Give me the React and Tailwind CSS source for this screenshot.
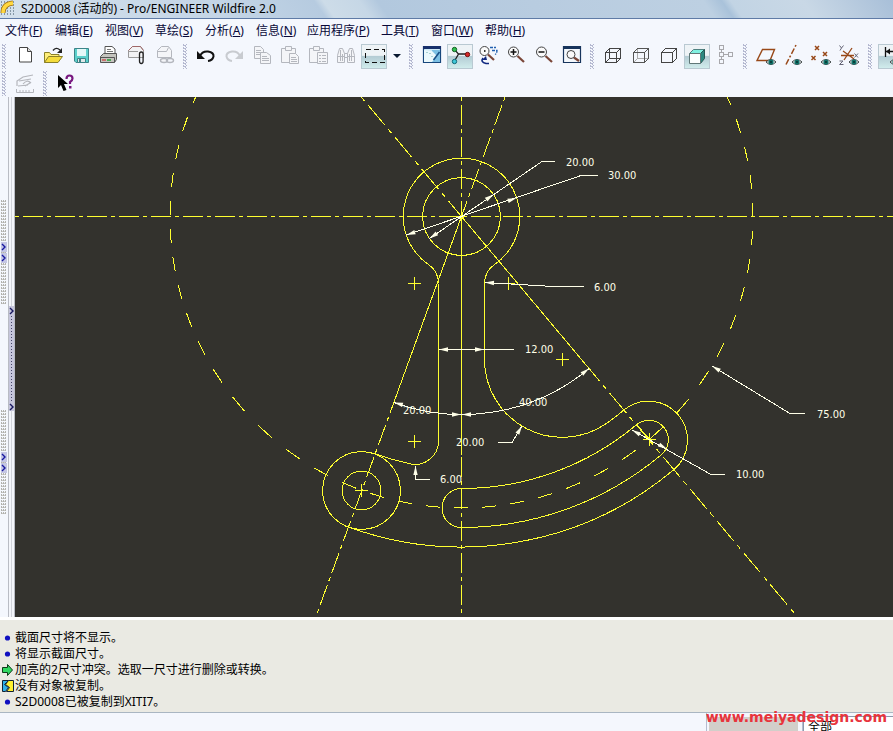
import React from "react";

const YELLOW = "#ffff30";
const PALE = "#ffffe8";

const MENUS = [
  ["文件", "F", "w-[50px]"],
  ["编辑", "E", "w-[50px]"],
  ["视图", "V", "w-[50px]"],
  ["草绘", "S", "w-[50px]"],
  ["分析", "A", "w-[51px]"],
  ["信息", "N", "w-[51px]"],
  ["应用程序", "P", "w-[74px]"],
  ["工具", "T", "w-[50px]"],
  ["窗口", "W", "w-[54px]"],
  ["帮助", "H", "w-[50px]"],
];

function Eye({ x, y }) {
  return (
    <g transform={`translate(${x} ${y})`}>
      <path d="M-5 0Q0 -5 5 0Q0 5 -5 0Z" fill="#e8eeee" stroke="#3c4444" />
      <circle r="2.6" fill="#0f7068" />
      <circle r="1" fill="#06302c" />
    </g>
  );
}

function Magnifier({ cx = 9.5, cy = 8, r = 5, end = 20, children }) {
  return (
    <>
      <path d={`M${cx + r - 1} ${cy + r - 1}L${end} ${end - 2}`} stroke="#7a4638" strokeWidth="2.2" />
      <circle cx={cx} cy={cy} r={r} fill="#fafafa" stroke="#444" strokeWidth="1" />
      {children}
    </>
  );
}

const GRAY = "#b4b7be";

const ICONS = {
  create: (
    <>
      <path d="M6.500 3.500h8l4 4v10.500h-12z" fill="#fff" stroke="#444" />
      <path d="M14.500 3.500v4h4" fill="#ddd" stroke="#444" />
    </>
  ),
  open: (
    <>
      <path d="M3.500 18.500V8.500h5l1.500 2h8v3" fill="#ffef7a" stroke="#8a8028" />
      <path d="M3.500 18.500l4-6h14l-4.500 6z" fill="#f4dc3c" stroke="#8a8028" />
      <path d="M12 6.500q3-4 7-.5" fill="none" stroke="#222" strokeWidth="1.300" />
      <path d="M21 4v5h-5z" fill="#222" />
    </>
  ),
  save: (
    <>
      <path d="M5.500 4.500h14v14h-12.500l-1.500-1.500z" fill="#5cd0cc" stroke="#3c8488" />
      <path d="M8 5h9v7h-9z" fill="#e4f8f8" />
      <path d="M8.500 14.500h8v4h-8z" fill="#e0e8e8" stroke="#3c8488" />
      <path d="M10 15h2v3h-2z" fill="#3c8488" />
    </>
  ),
  print: (
    <>
      <path d="M8 10V2.500h7l3 2.500v6" fill="#fff" stroke="#555" />
      <path d="M10 5.500h4M10 7.500h6" stroke="#777" />
      <path d="M3.500 12.500l3-3h13v6l-2 3h-14z" fill="#c4c4be" stroke="#555" />
      <path d="M3.500 13.500h14v5" fill="none" stroke="#555" />
      <path d="M5 16h4" stroke="#d02020" />
      <path d="M10 16h4" stroke="#20a030" strokeWidth="1.500" />
    </>
  ),
  mail: (
    <>
      <path d="M3.500 13.500V6.500l4-4h8l3 4v7z" fill="#f2f2f4" stroke="#999" />
      <path d="M3.500 6.500l4-4h8l3 4" fill="none" stroke="#a06868" />
      <path d="M4 7.500h9M6 13.500h6" stroke="#999" />
      <path d="M14.500 11v6q0 2.500 1.800 2.500t1.800-2.500v-7q0-2-1.800-2t-1.800 2v6" fill="none" stroke="#222" strokeWidth="1.300" />
    </>
  ),
  link: (
    <>
      <path d="M4.500 13.500V6.500l4-4h7l3 4v7z" fill="#f4f5f8" stroke={GRAY} />
      <path d="M4.500 7.500h9l2-4" fill="none" stroke={GRAY} />
      <ellipse cx="11" cy="16.500" rx="3.500" ry="2" fill="#f4f5f8" stroke={GRAY} strokeWidth="1.400" />
      <ellipse cx="17" cy="16.500" rx="3.500" ry="2" fill="none" stroke={GRAY} strokeWidth="1.400" />
    </>
  ),
  undo: (
    <>
      <path d="M6 12q2-5 8-4.500q6 1 5.500 5q-1 4-5.500 4.500" fill="none" stroke="#111" strokeWidth="2" />
      <path d="M3 7v8h8z" fill="#111" />
    </>
  ),
  redo: (
    <>
      <path d="M18 12q-2-5-8-4.500q-6 1-5.500 5q1 4 5.500 4.500" fill="none" stroke="#c8cbd0" strokeWidth="2" />
      <path d="M21 7v8h-8z" fill="#c8cbd0" />
    </>
  ),
  copy: (
    <g fill="#f4f5f8" stroke={GRAY}>
      <path d="M4.500 2.500h6l3 3v9h-9z" />
      <path d="M6 6.500h5M6 8.500h5M6 10.500h5" />
      <path d="M10.500 8.500h6l4 3v8h-10z" />
      <path d="M12 12.500h5M12 14.500h7M12 16.500h7" />
    </g>
  ),
  paste: (
    <g fill="#f4f5f8" stroke={GRAY}>
      <path d="M3.500 4.500h14v14h-14z" />
      <path d="M7.500 2.500h6v4h-6z" />
      <path d="M11.500 9.500h6l3 3v7h-9z" />
      <path d="M13 13.500h5M13 15.500h6M13 17.500h6" />
    </g>
  ),
  special: (
    <g fill="#f4f5f8" stroke={GRAY}>
      <path d="M3.500 4.500h14v14h-14z" />
      <path d="M7.500 2.500h6v4h-6z" />
      <path d="M11.500 8.500h10v11h-10z" />
      <path d="M13 11.500h2M16 11.500h4M13 14.500h2M16 14.500h4M13 17.500h2M16 17.500h4" />
    </g>
  ),
  find: (
    <g fill="#f4f5f8" stroke={GRAY}>
      <path d="M5.500 4.500h3l2 5v9h-7v-7z" />
      <path d="M15.500 4.500h3l2 7v7h-7v-9z" />
      <path d="M4 12.500h6M14 12.500h6M10.500 9.500h3M10.500 13.500h3M6.500 6v11M17.500 6v11M8.500 10v7M15.500 10v7" />
    </g>
  ),
  select: <path d="M3.500 5.500h19v13h-19z" fill="none" stroke="#111" strokeDasharray="5 3" shapeRendering="crispEdges" />,
  sketch: (
    <>
      <path d="M3.500 2.500h17v16h-17z" fill="#cfeaf6" stroke="#17477c" strokeWidth="1.200" />
      <path d="M3 2h18v3h-18z" fill="#17306c" />
      <path d="M12 6h8v12h-10z" fill="#7cc0e4" />
      <path d="M4 6l8 1 5 5-5 6h-8z" fill="#eaf8fc" />
      <path d="M19.500 8l-6 8" stroke="#174f86" strokeWidth="1.600" />
      <path d="M7 8v1M10 9v1M12 12v1" stroke="#6aa" />
    </>
  ),
  nodes: (
    <>
      <path d="M6.500 5.500l4 4.500-4 7M10 10h9" fill="none" stroke="#222" strokeWidth="1.300" />
      <circle cx="6.500" cy="5.500" r="2.200" fill="#30c050" stroke="#146024" />
      <circle cx="19.500" cy="10.500" r="2.200" fill="#d82828" stroke="#701010" />
      <circle cx="6.500" cy="17.500" r="2.200" fill="#40c8d8" stroke="#106878" />
    </>
  ),
  orient: (
    <>
      <Magnifier cx={8.5} cy={7} r={4.5} end={18}>
        <path d="M8 7h2M8.500 6v2" stroke="#333" />
      </Magnifier>
      <path d="M14 3.500h6M16 6.500h5q0 3-2 4" fill="none" stroke="#2060b0" strokeWidth="1.300" strokeDasharray="3 1" />
      <path d="M7 14q-3 4 3 5.500h3" fill="none" stroke="#102880" strokeWidth="1.600" />
      <path d="M6 16h5l-1-4z" fill="#102880" />
    </>
  ),
  zoomIn: (
    <Magnifier>
      <path d="M6.500 8h6M9.500 5v6" stroke="#111" strokeWidth="1.500" />
    </Magnifier>
  ),
  zoomOut: (
    <Magnifier>
      <path d="M6.500 8h6" stroke="#111" strokeWidth="1.500" />
    </Magnifier>
  ),
  fit: (
    <>
      <path d="M3.500 2.500h17v16h-17z" fill="#f4f8fc" stroke="#17345c" strokeWidth="1.200" />
      <path d="M3 2h18v3h-18z" fill="#17345c" />
      <Magnifier cx={11} cy={10.5} r={4} end={19} />
    </>
  ),
  wire: (
    <g fill="none" stroke="#444" shapeRendering="crispEdges">
      <path d="M4.500 8.500h11v10h-11zM8.500 4.500h11v10h-11zM4.500 8.500l4-4M15.500 8.500l4-4M4.500 18.500l4-4M15.500 18.500l4-4" />
    </g>
  ),
  hidden: (
    <g fill="none" shapeRendering="crispEdges">
      <path d="M8.500 4.500v10h11M4.500 18.500l4-4" stroke="#aaa" />
      <path d="M4.500 8.500h11v10h-11zM4.500 8.500l4-4h11v10l-4 4M15.500 8.500l4-4" stroke="#555" />
    </g>
  ),
  noHidden: (
    <path d="M4.500 8.500h11v10h-11zM4.500 8.500l4-4h11v10l-4 4M15.500 8.500l4-4" fill="none" stroke="#444" shapeRendering="crispEdges" />
  ),
  shaded: (
    <>
      <path d="M4.500 9.500l4-4h11l-4 4z" fill="#7ff0e0" stroke="#508080" />
      <path d="M15.500 9.500l4-4v9l-4 5z" fill="#2c8880" stroke="#285854" />
      <path d="M4.500 9.500h11v10h-11z" fill="#fcffff" stroke="#607878" />
    </>
  ),
  tree: (
    <path
      d="M6.500 1.500h4v4h-4zM6.500 8.500h4v4h-4zM6.500 15.500h4v4h-4zM15.500 8.500h4v4h-4zM8.500 5.500v3M8.500 12.500v3M10.500 10.500h5"
      fill="none" stroke="#a8a8ac" shapeRendering="crispEdges"
    />
  ),
  plane: (
    <>
      <path d="M3 16.500L8.500 5.500H20.500L16 16.500z" fill="none" stroke="#984818" strokeWidth="1.400" />
      <Eye x={17} y={18} />
    </>
  ),
  axis: (
    <>
      <path d="M4 20.500L14 1" stroke="#984818" strokeWidth="1.500" strokeDasharray="6 2 2 2" />
      <Eye x={15} y={18} />
    </>
  ),
  points: (
    <>
      <path d="M5 2l4 4M9 2l-4 4M13 8l4 4M17 8l-4 4M1.500 12l4 4M5.500 12l-4 4" stroke="#984818" strokeWidth="1.500" />
      <Eye x={16} y={18} />
    </>
  ),
  csys: (
    <>
      <path d="M5 7l11 8M14 4L6 16M3 11.500h13" stroke="#984818" strokeWidth="1.300" />
      <path d="M1.500 1.500l2 2.500 2-2.500M3.500 4l-1.500 2.500M16.500 9.500l3.500 4M20 9.500l-3.500 4M1.500 17h3.500l-3.500 3.500h4" fill="none" stroke="#667" />
      <Eye x={16} y={18} />
    </>
  ),
  dims: (
    <>
      <path d="M6.500 3v10M7 7.500h14" stroke="#111" strokeWidth="1.300" />
      <path d="M7 7.500l4-3v6z" fill="#111" />
      <Eye x={16} y={18} />
    </>
  ),
  sketcher: (
    <g fill="none" stroke="#b4b6bc">
      <path d="M4 14V9l6-4 10-2M6 9l12-2M10 12q4-5 8-1M5 14l10-1M12 14l5-3" strokeWidth="1.200" />
      <path d="M3.500 17v3.500h17V17M7 18v2M10 18v2M13 18v2M16 18v2" />
    </g>
  ),
  help: (
    <>
      <path d="M4 3v13l3-3 2.500 6 3-1-2.500-6h4z" fill="#000" />
      <path d="M12.500 7q0-3.500 3-3.500t3 3q0 2-2.500 3.500v2" fill="none" stroke="#781880" strokeWidth="2.200" />
      <path d="M15 14h2.500v2.500H15z" fill="#781880" />
    </>
  ),
};

function Tool({ icon, label, pressed }) {
  return (
    <button type="button" aria-label={label} className="flex h-full w-7 shrink-0 items-center justify-center">
      <span
        className={
          pressed
            ? "flex h-[25px] w-[26px] items-center justify-center border border-[#b9c9d2] bg-linear-to-b from-[#eef3f6] from-45% via-[#b4ccd4] via-50% to-[#d0ecec]"
            : "flex h-[25px] w-[26px] items-center justify-center"
        }
      >
        <svg width="24" height="24" viewBox="0 0 24 24" className="shrink-0">{ICONS[icon]}</svg>
      </span>
    </button>
  );
}

function Grip({ first }) {
  return (
    <span className={first ? "flex w-[11px] shrink-0 items-center pl-[2px]" : "flex w-[13px] shrink-0 items-center pl-1"}>
      <svg width="4" height="25" viewBox="0 0 4 25" shapeRendering="crispEdges">
        <path d="M.5 0v25M2.500 1v24" stroke="#b4b8d0" strokeDasharray="2 1" />
        <path d="M1.500 1v24M3.500 0v25" stroke="#b4b8d0" strokeDasharray="1 2" />
      </svg>
    </span>
  );
}

const GROUPS = [
  [["create", "新建"], ["open", "打开"], ["save", "保存"], ["print", "打印"], ["mail", "发送邮件"], ["link", "发送链接"]],
  [["undo", "撤消"], ["redo", "重做"], ["copy", "复制"], ["paste", "粘贴"], ["special", "选择性粘贴"], ["find", "查找"], ["select", "选取", true]],
  [["sketch", "草绘视图"], ["nodes", "旋转中心", true], ["orient", "定向模式"], ["zoomIn", "放大"], ["zoomOut", "缩小"], ["fit", "重新调整"]],
  [["wire", "线框"], ["hidden", "隐藏线"], ["noHidden", "无隐藏线"], ["shaded", "着色", true], ["tree", "模型树"]],
  [["plane", "基准平面"], ["axis", "基准轴"], ["points", "基准点"], ["csys", "坐标系"]],
  [["dims", "显示尺寸", true]],
];

function SideGrip() {
  return (
    <svg width="6" height="105" viewBox="0 0 6 105" className="ml-px">
      <g shapeRendering="crispEdges">
        <path d="M.5 0v105M2.500 0v105M4.500 0v105" stroke="#b2b2ae" strokeDasharray="2 1" />
        <path d="M1.500 1v104M3.500 1v104" stroke="#c9c9c6" strokeDasharray="1 2" />
        <path d="M0 42h6v10h-6zM0 53h6v10h-6z" fill="#c4c6e4" />
      </g>
      <path d="M1 44l3 3-3 3M1 55l3 3-3 3" fill="none" stroke="#1818a0" strokeWidth="1.400" />
    </svg>
  );
}

function Sashes() {
  return (
    <div className="flex w-[15px] shrink-0">
      <div className="flex w-2 flex-col gap-[105px] pt-[103px]">
        <SideGrip />
        <SideGrip />
      </div>
      <div className="w-[7px] border-x border-[#b9bcc4] bg-linear-to-r from-[#f4f6fb] from-35% via-[#b9bcc4] via-40% to-[#f4f6fb] to-65% pt-[209px]">
        <svg width="5" height="105" viewBox="0 0 5 105">
          <path d="M0 0h5v105h-5z" fill="#c6c6dc" />
          <path d="M2.500 10v86" stroke="#444468" strokeDasharray="1 2" shapeRendering="crispEdges" />
          <path d="M1 2l3 3-3 3M1 98l3 3-3 3" fill="none" stroke="#181860" strokeWidth="1.400" />
        </svg>
      </div>
    </div>
  );
}

/* The reference circle is dashed along its steeper axis: 14 on, 14 off. */
const CX = 461.5;
const CY = 216.5;
const BIG = 291.5;
const atY = (y, side) => `${CX + side * Math.sqrt(BIG * BIG - (y - CY) ** 2)} ${y}`;
const atX = (x) => `${x} ${CY + Math.sqrt(BIG * BIG - (x - CX) ** 2)}`;
const range = (start, step, count) => Array.from({ length: count }, (_, i) => start + i * step);
const BIG_DASHES = [
  ...range(91, 28, 12).map((y) => `M${atY(y, 1)}L${atY(y + 14, 1)}`),
  ...range(258, 28, 15).map((x) => `M${atX(x)}L${atX(x + 14)}`),
  ...range(89, 28, 12).map((y) => `M${atY(y, -1)}L${atY(y + 14, -1)}`),
].join("");

const CROSSES = [[414.5, 283.5], [508.5, 283.5], [562.5, 359.5], [414.5, 441.5], [361.5, 490.5], [649.5, 439.5]];

/* Tip position and the angle, in degrees, that each arrow points to. */
const ARROWS = [
  [493.5, 194.5, -35], [429.5, 238.5, 145], [516.5, 198, -19], [406.5, 235, 161],
  [485, 282.5, 183], [439, 349.5, 180], [484, 349.5, 0],
  [589, 368.5, -38], [394, 402.5, 196], [461, 414.5, 0], [462, 414.5, 180],
  [522, 426, -59], [415.5, 466, -90], [712, 366, 211], [632, 430, 209], [667, 449, 29],
];

const LABELS = [
  [566, 166, "20.00"], [608, 179, "30.00"], [594, 291, "6.00"], [525, 353, "12.00"],
  [519, 406, "40.00"], [403, 414, "20.00"], [456, 446, "20.00"], [440, 483, "6.00"],
  [817, 418, "75.00"], [736, 478, "10.00"],
];

function Drawing() {
  return (
    <svg
      viewBox="15 97 878 520"
      preserveAspectRatio="xMinYMin slice"
      className="block h-full w-full"
      fill="none"
      stroke={YELLOW}
      role="img"
      aria-label="S2D0008"
    >
      <g shapeRendering="crispEdges">
        <path d={BIG_DASHES} />
        <path d="M15 216.500H893" strokeDasharray="20 4 4 4" strokeDashoffset="24" />
        <path d="M461.500 97V613" strokeDasharray="20 4 4 4" strokeDashoffset="24" />
        <path d="M361.200 97L461.500 216.500" strokeDasharray="26.100 5.200 5.200 5.200" strokeDashoffset="31.300" />
        <path d="M505 97L461.500 216.500" strokeDasharray="21.300 4.250 4.250 4.250" strokeDashoffset="25.550" />
        <path d="M582.700 361L794.200 613" strokeDasharray="26.100 5.200 5.200 5.200" />
        <path d="M397.300 393L317.200 613" strokeDasharray="21.300 4.250 4.250 4.250" />
        <path d="M461.500 216.500L590.300 370M461.500 216.500L393.600 403M461.500 216.500V455" />

        <circle cx="461.500" cy="216.500" r="38.900" />
        <path d="M438.500 283.500A23.300 23.300 0 0 0 428 264.200A58.300 58.300 0 1 1 495 264.200A23.300 23.300 0 0 0 484.500 283.500V359A77.700 77.700 0 0 0 607.400 422.800A252.600 252.600 0 0 0 623.900 410A38.900 38.900 0 0 1 673.900 469.600A330.400 330.400 0 0 1 348.500 527" />
        <path d="M438.500 283.500V441A23.300 23.300 0 0 1 409.700 463.700A252.600 252.600 0 0 1 375.100 453.900" />
        <path d="M461.500 488.500A272 272 0 0 0 636.300 424.900A19.400 19.400 0 0 1 661.400 454.700A311 311 0 0 1 461.500 527.500A19.500 19.500 0 0 1 461.500 488.500Z" />
        <circle cx="361.500" cy="490.500" r="19.400" />
        <circle cx="361.500" cy="490.500" r="38.900" />
        {CROSSES.map(([x, y]) => (
          <path key={`${x},${y}`} d={`M${x - 6.5} ${y}h13M${x} ${y - 6.5}v13`} />
        ))}
        <path d="M636 424l17.500 19.500" />
        <path d="M459.500 214.500h4v4h-4z" fill={YELLOW} stroke="none" />
      </g>

      <g stroke={PALE} shapeRendering="crispEdges">
        <path d="M429.500 238.500L542 161.500H555" />
        <path d="M406.500 235L581 175.500H598" />
        <path d="M485 282.500L554 286.500H584" />
        <path d="M439 349.500H514" />
        <path d="M394 402.500A198 198 0 0 0 589 368.500" />
        <path d="M498 442.500H512L522 426" />
        <path d="M415.500 466V479.500H430" />
        <path d="M712 366L790 413.500H805" />
        <path d="M632 430L711 474.500H725" />
      </g>
      <g fill={PALE} stroke="none">
        {ARROWS.map(([x, y, a]) => (
          <path key={`${x},${y},${a}`} d="M0 0L-9 -2.200V2.200Z" transform={`translate(${x} ${y}) rotate(${a})`} />
        ))}
      </g>
      <g fill={PALE} stroke="none" className="font-['DejaVu_Sans_Condensed','DejaVu_Sans',sans-serif] text-[11px]">
        {LABELS.map(([x, y, text]) => (
          <text key={`${x},${y}`} x={x} y={y}>{text}</text>
        ))}
      </g>
    </svg>
  );
}

const bullet = <circle cx="7.500" cy="8" r="2.600" fill="#1010c0" />;
const MESSAGES = [
  [bullet, "截面尺寸将不显示。"],
  [bullet, "将显示截面尺寸。"],
  [
    <path d="M2.500 5.500h5v-3l5 5.500-5 5.500v-3h-5z" fill="#30d860" stroke="#0c3c18" />,
    "加亮的2尺寸冲突。选取一尺寸进行删除或转换。",
  ],
  [
    <>
      <path d="M2.500 2.500h6l-4 4 4 3-3 4h-3z" fill="#30b0e8" stroke="#123" />
      <path d="M13.500 2.500h-5l-3 4 4 3-3 4h7z" fill="#fff030" stroke="#123" />
    </>,
    "没有对象被复制。",
  ],
  [bullet, "S2D0008已被复制到XITI7。"],
];

export default function App() {
  return (
    <div className="flex h-screen flex-col overflow-hidden bg-[#f4f7fd] font-['Noto_Sans','Noto_Sans_CJK_SC',sans-serif] text-xs text-black">
      <header className="flex h-[19px] shrink-0 items-center gap-1 border-b border-[#5f7ba6] bg-[linear-gradient(55deg,#d4e1ec_0%,#c4d5e6_25%,#b6cbe0_36%,#cddce8_37%,#c6d7e6_41%,#b2c8de_43%,#b8cce0_60%,#bdd0e2_79%,#a9c2da_81%,#c2d4e4_82%,#c9d8e6_90%,#a8bfd8_100%)]">
        <svg width="17" height="18" viewBox="0 0 17 18" className="shrink-0">
          <path d="M1 2h15M1 5h15M1 8h15M1 11h15M1 14h15" stroke="#385060" strokeDasharray="1 2" />
          <path d="M3 13Q3 4 13 3" fill="none" stroke="#a07010" strokeWidth="5" />
          <path d="M3 13Q3 4 13 3" fill="none" stroke="#ffd840" strokeWidth="3.500" />
        </svg>
        <h1 className="whitespace-nowrap leading-4">S2D0008 (活动的) - Pro/ENGINEER Wildfire 2.0</h1>
      </header>

      <nav className="flex h-[23px] shrink-0 items-center pl-[5px] text-[#080838]">
        {MENUS.map(([name, key, width]) => (
          <button key={key} type="button" className={`${width} shrink-0 whitespace-nowrap text-left leading-4`}>
            {name}(<u>{key}</u>)
          </button>
        ))}
      </nav>

      <div className="flex h-7 shrink-0 overflow-hidden">
        {GROUPS.map((group, i) => (
          <React.Fragment key={i}>
            <Grip first={i === 0} />
            {group.map(([icon, label, pressed]) => (
              <Tool key={icon} icon={icon} label={label} pressed={pressed} />
            ))}
            {i === 1 && (
              <button type="button" aria-label="选取选项" className="flex w-[17px] shrink-0 items-center justify-center">
                <svg width="8" height="4" viewBox="0 0 8 4"><path d="M0 0h8L4 4z" fill="#081830" /></svg>
              </button>
            )}
          </React.Fragment>
        ))}
      </div>
      <div className="flex h-[27px] shrink-0">
        <Grip first />
        <Tool icon="sketcher" label="草绘器" />
        <Grip />
        <Tool icon="help" label="帮助" />
      </div>

      <main className="flex min-h-0 flex-1">
        <Sashes />
        <div className="min-w-0 flex-1 bg-[#33322d]">
          <Drawing />
        </div>
      </main>

      <section className="shrink-0 border-t-3 border-b border-t-white border-b-[#a9b6c2] bg-[#eaeae3] pt-[10px] pb-[2px]">
        <ul>
          {MESSAGES.map(([mark, text]) => (
            <li key={text} className="flex h-4 items-center leading-4">
              <svg width="15" height="16" viewBox="0 0 15 16" className="shrink-0">{mark}</svg>
              {text}
            </li>
          ))}
        </ul>
      </section>

      <footer className="flex h-[18px] shrink-0 justify-end overflow-hidden">
        <div className="flex w-[97px] border-x border-[#b4bcd0] pt-1 pr-1 pl-[2px]">
          <div className="flex-1 bg-[#d2cfca]" />
        </div>
        <select aria-label="过滤器" className="mt-[3px] h-5 w-[90px] appearance-none border-t border-l border-[#8c98ac] bg-white pl-1 leading-4">
          <option>全部</option>
        </select>
      </footer>
      <p className="absolute right-[6px] bottom-[6px] font-['DejaVu_Sans',sans-serif] text-sm leading-4 font-bold text-[#e8343c]">
        www.meiyadesign.com
      </p>
    </div>
  );
}
